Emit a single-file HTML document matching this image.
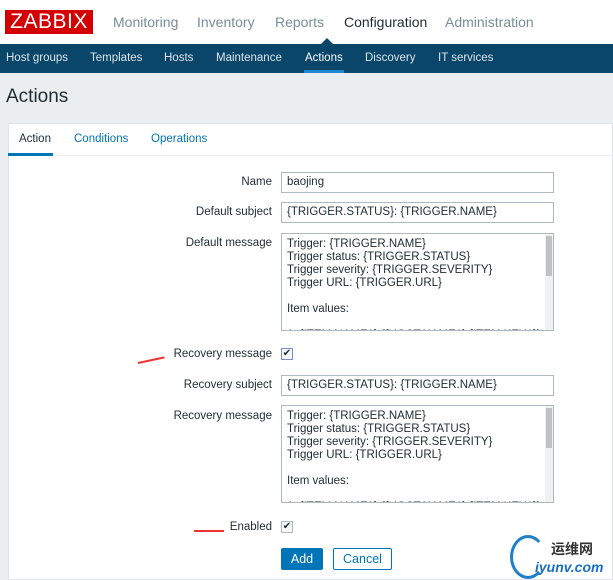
<!DOCTYPE html>
<html><head><meta charset="utf-8"><style>
*{box-sizing:border-box;margin:0;padding:0}
body{width:613px;height:580px;overflow:hidden;background:#ebeef0;font-family:"Liberation Sans",Arial,sans-serif;position:relative;font-size:11.5px;color:#1f2c33}
.top{position:absolute;left:0;top:0;width:613px;height:44px;background:#fff}
.logo{position:absolute;left:5px;top:10px;width:88px;height:24px;background:#d40000;color:#fff;font-size:21px;line-height:24px;text-align:center;letter-spacing:0.5px}
.tm{position:absolute;top:14px;font-size:14px;color:#768d99}
.nav{position:absolute;left:0;top:44px;width:613px;height:29px;background:#0a466a}
.nav span{position:absolute;top:8px;color:#fff;font-size:11.5px;opacity:.85}
.caret{position:absolute;left:321px;top:38px;width:0;height:0;border-left:6px solid transparent;border-right:6px solid transparent;border-bottom:6px solid #0a466a}
h1{position:absolute;left:6px;top:86px;font-size:19px;font-weight:normal;color:#1f2c33}
.panel{position:absolute;left:8px;top:123px;width:605px;height:457px;background:#fff;border:1px solid #dfe4e7}
.tabs{position:absolute;left:8px;top:123px;width:605px;height:33px;border-bottom:1px solid #ebeef0}
.tab{position:absolute;top:133px;font-size:11.5px;color:#0275b8}
.lbl{position:absolute;right:341px;font-size:11.5px;color:#1f2c33;white-space:nowrap}
.in{position:absolute;left:281px;width:273px;border:1px solid #acbbc2;background:#fff;font-size:11.5px;padding:3px 5px;height:21px}
.ta{position:absolute;left:281px;width:273px;height:98px;border:1px solid #acbbc2;background:#fff;font-size:11.5px;padding:4px 5px;line-height:13px;overflow:hidden}
.sb{position:absolute;right:0;top:0;width:8px;height:100%;background:#f0f0f0}
.sb i{position:absolute;left:1px;top:2px;width:6px;height:40px;background:#c1c1c1}
.cb{position:absolute;left:281px;width:12px;height:12px;border:1px solid #acbbc2;background:#f4f6f8;font-size:10px;line-height:10px;text-align:center}
.arrow{position:absolute;height:2px;background:#e33;transform-origin:left}
</style></head><body>
<div class="top">
<div class="logo">ZABBIX</div>
<span class="tm" style="left:113px">Monitoring</span>
<span class="tm" style="left:197px">Inventory</span>
<span class="tm" style="left:275px">Reports</span>
<span class="tm" style="left:344px;color:#1f2c33">Configuration</span>
<span class="tm" style="left:445px">Administration</span>
</div>
<div class="caret"></div>
<div class="nav">
<span style="left:6px">Host groups</span>
<span style="left:90px">Templates</span>
<span style="left:164px">Hosts</span>
<span style="left:216px">Maintenance</span>
<span style="left:305px;opacity:1">Actions</span>
<span style="left:365px">Discovery</span>
<span style="left:438px">IT services</span>
<div style="position:absolute;left:304px;top:26px;width:40px;height:3px;background:#1e87cf"></div>
</div>
<h1>Actions</h1>
<div class="panel"></div>
<div class="tabs"></div>
<span class="tab" style="left:19px;color:#1f2c33">Action</span>
<span class="tab" style="left:74px">Conditions</span>
<span class="tab" style="left:151px">Operations</span>
<div style="position:absolute;left:8px;top:153px;width:45px;height:3px;background:#0275b8"></div>

<span class="lbl" style="top:176px">Name</span>
<div class="in" style="top:172px">baojing</div>
<span class="lbl" style="top:206px">Default subject</span>
<div class="in" style="top:202px">{TRIGGER.STATUS}: {TRIGGER.NAME}</div>
<span class="lbl" style="top:237px">Default message</span>
<div class="ta" style="top:233px">Trigger: {TRIGGER.NAME}<br>Trigger status: {TRIGGER.STATUS}<br>Trigger severity: {TRIGGER.SEVERITY}<br>Trigger URL: {TRIGGER.URL}<br><br>Item values:<br><br>1. {ITEM.NAME1} ({HOST.NAME1}:{ITEM.KEY1})<div class="sb"><i></i></div></div>

<span class="lbl" style="top:348px">Recovery message</span>
<div class="cb" style="top:348px;border-color:#7a8fd0">✔</div>
<div class="arrow" style="left:138px;top:362px;width:27px;transform:rotate(-12deg)"></div>
<span class="lbl" style="top:379px">Recovery subject</span>
<div class="in" style="top:375px">{TRIGGER.STATUS}: {TRIGGER.NAME}</div>
<span class="lbl" style="top:410px">Recovery message</span>
<div class="ta" style="top:405px">Trigger: {TRIGGER.NAME}<br>Trigger status: {TRIGGER.STATUS}<br>Trigger severity: {TRIGGER.SEVERITY}<br>Trigger URL: {TRIGGER.URL}<br><br>Item values:<br><br>1. {ITEM.NAME1} ({HOST.NAME1}:{ITEM.KEY1})<div class="sb"><i></i></div></div>

<span class="lbl" style="top:521px">Enabled</span>
<div class="cb" style="top:521px">✔</div>
<div class="arrow" style="left:194px;top:530px;width:30px"></div>
<div style="position:absolute;left:281px;top:548px;width:42px;height:22px;background:#0275b8;color:#fff;border-radius:2px;text-align:center;line-height:22px;font-size:12.5px">Add</div>
<div style="position:absolute;left:333px;top:548px;width:59px;height:22px;border:1px solid #0275b8;color:#0275b8;border-radius:2px;text-align:center;line-height:20px;font-size:12.5px;background:#fff">Cancel</div>
<div style="position:absolute;left:510px;top:535px;width:36px;height:44px;border:3px solid #1c7fc7;border-radius:50%;border-right-color:transparent"></div>
<span style="position:absolute;left:551px;top:539px;font-size:14px;color:#333;font-family:'Liberation Sans','Noto Sans CJK SC',sans-serif;font-weight:bold">运维网</span>
<span style="position:absolute;left:535px;top:559px;font-size:14px;color:#1c6fc0;font-weight:bold;font-style:italic">iyunv.com</span>
</body></html>
